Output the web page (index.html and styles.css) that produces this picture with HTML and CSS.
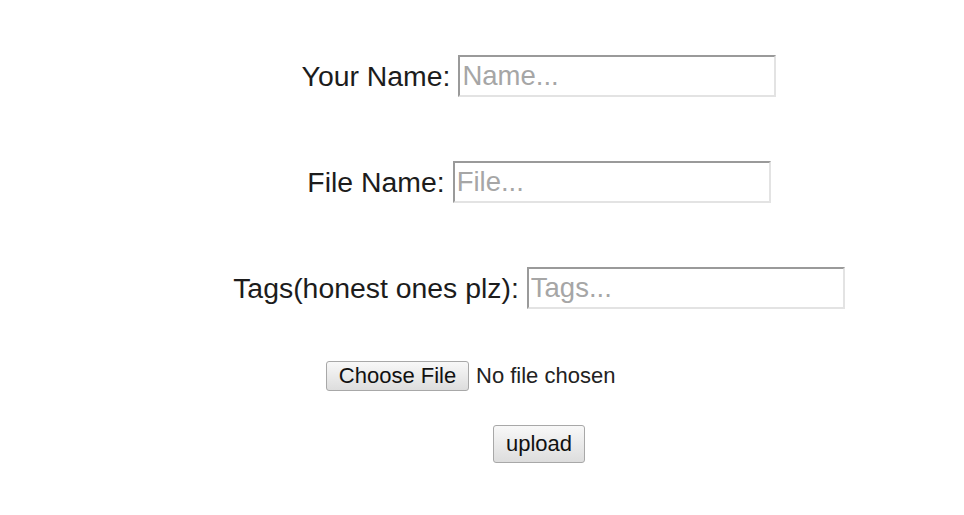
FILE: index.html
```html
<!DOCTYPE html>
<html>
<head>
<meta charset="utf-8">
<link rel="stylesheet" href="styles.css">
</head>
<body>
<form class="form">
  <div class="row">
    <label class="label" for="name">Your Name:</label>
    <input class="field" id="name" type="text" placeholder="Name...">
  </div>
  <div class="row">
    <label class="label" for="file">File Name:</label>
    <input class="field" id="file" type="text" placeholder="File...">
  </div>
  <div class="row">
    <label class="label" for="tags">Tags(honest ones plz):</label>
    <input class="field" id="tags" type="text" placeholder="Tags...">
  </div>
  <div class="row row-file">
    <div class="file-input">
      <button type="button" class="btn btn-choose">Choose File</button>
      <span class="file-status">No file chosen</span>
    </div>
  </div>
  <div class="row row-submit">
    <button type="button" class="btn btn-upload">upload</button>
  </div>
</form>
</body>
</html>
```
FILE: styles.css
```css
html, body {
  margin: 0;
  padding: 0;
  background: #ffffff;
}
body {
  font-family: "Liberation Sans", Arial, sans-serif;
  color: #1a1a1a;
}
.form {
  padding: 55px 0 0 114px;
  display: flex;
  flex-direction: column;
}
.row {
  display: flex;
  justify-content: center;
  align-items: center;
  height: 42px;
  margin-bottom: 64px;
}
.label {
  font-size: 28.4px;
  margin-right: 8px;
  color: #1c1c1c;
}
.field {
  box-sizing: border-box;
  width: 318px;
  height: 42px;
  margin: 0;
  padding: 0 2px;
  font-family: "Liberation Sans", Arial, sans-serif;
  font-size: 27.5px;
  color: #000;
  background: #fff;
  border-style: solid;
  border-width: 2px;
  border-color: #9a9a9a #e3e3e3 #e3e3e3 #9a9a9a;
  outline: none;
}
.field::placeholder {
  color: #a6a6a6;
}
.row-file {
  height: 30px;
  margin-top: -12px;
  margin-bottom: 34px;
}
.file-input {
  width: 426px;
  display: flex;
  align-items: center;
}
.btn {
  box-sizing: border-box;
  font-family: "Liberation Sans", Arial, sans-serif;
  font-size: 22px;
  color: #111;
  background: linear-gradient(#f8f8f8, #dddddd);
  border: 1px solid #a8a8a8;
  border-radius: 3px;
  margin: 0;
  padding: 0 12px;
}
.btn-choose {
  width: 143px;
  height: 30px;
  padding: 0;
}
.file-status {
  font-size: 22px;
  color: #222;
  margin-left: 7px;
}
.row-submit {
  height: 38px;
  margin-bottom: 0;
}
.btn-upload {
  width: 92px;
  height: 38px;
  padding: 0;
}
```
